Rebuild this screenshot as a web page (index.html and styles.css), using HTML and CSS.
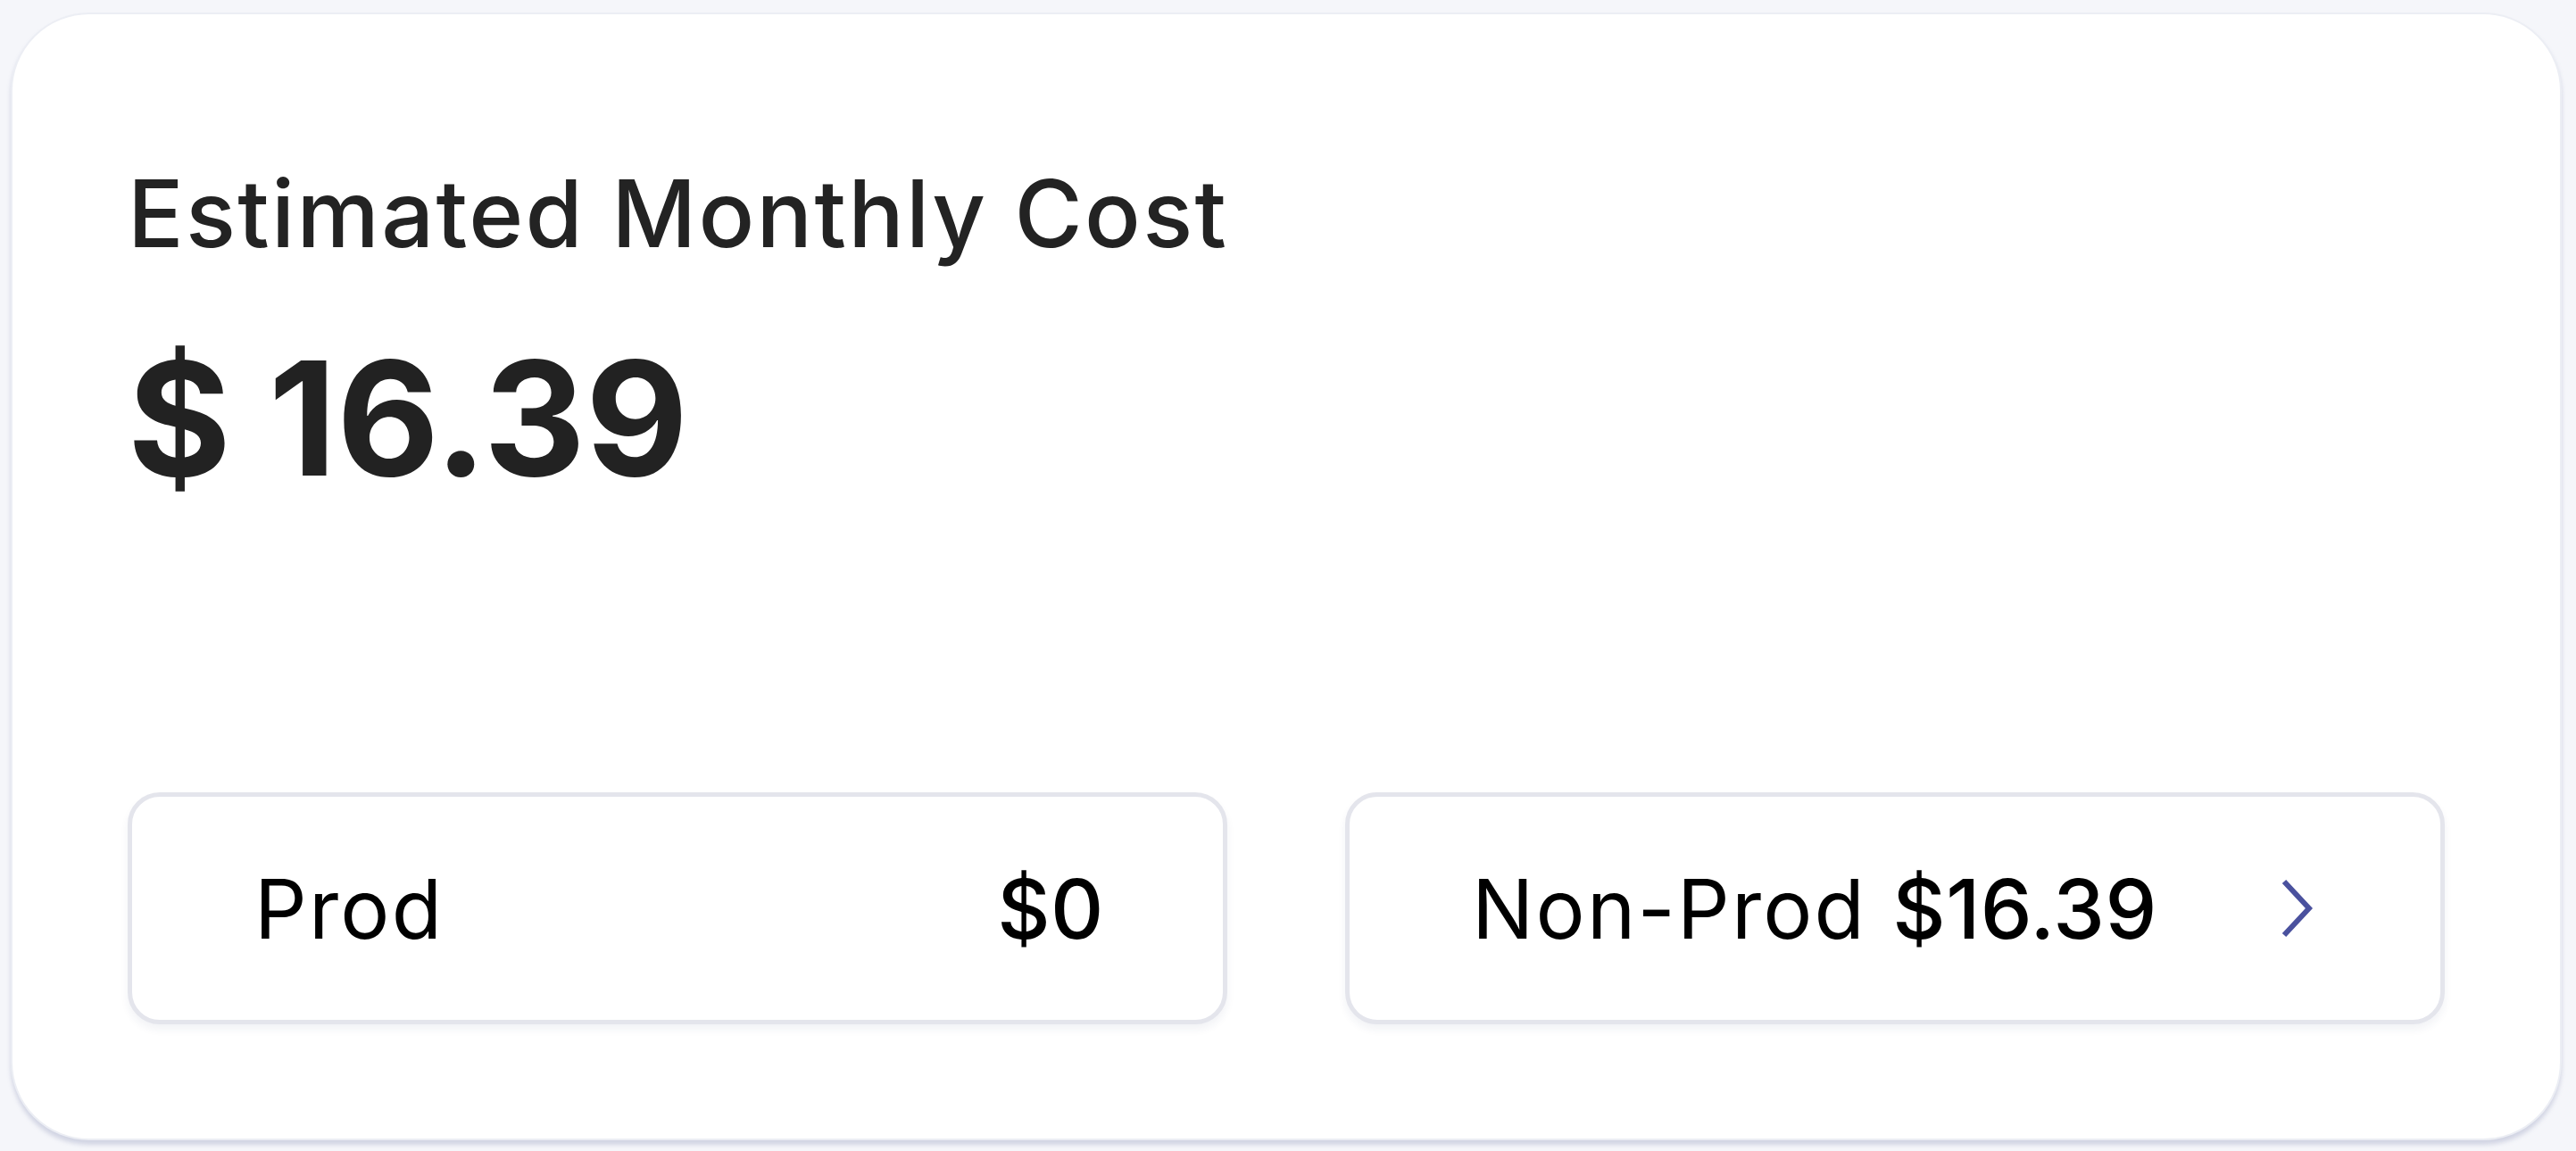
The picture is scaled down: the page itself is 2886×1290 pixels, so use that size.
FILE: index.html
```html
<!DOCTYPE html>
<html lang="en">
<head>
<meta charset="utf-8">
<title>Estimated Monthly Cost</title>
<link rel="stylesheet" href="styles.css">
</head>
<body>
  <section class="card">
    <h2 class="card-title">Estimated Monthly Cost</h2>
    <div class="total">$ 16.39</div>
    <div class="env-row">
      <div class="env-box">
        <span class="env-label">Prod</span>
        <span class="env-value">$0</span>
      </div>
      <div class="env-box">
        <span class="env-label">Non-Prod</span>
        <span class="env-value">$16.39</span>
        <svg class="chevron" viewBox="0 0 36 66" width="36" height="66" aria-hidden="true">
          <path d="M4 3 L32 33 L4 63" fill="none" stroke="#4a519e" stroke-width="6" stroke-linecap="butt" stroke-linejoin="miter"/>
        </svg>
      </div>
    </div>
  </section>
</body>
</html>
```
FILE: styles.css
```css
html, body {
  margin: 0;
  height: 100%;
}
body {
  box-sizing: border-box;
  background: #f5f6fa;
  padding: 14px 16px 12px 12px;
  display: flex;
  font-family: Inter, "Noto Sans", sans-serif;
}
.card {
  flex: 1;
  display: flex;
  flex-direction: column;
  background: #ffffff;
  border: 2px solid #eceef4;
  border-radius: 88px;
  box-shadow: 0 5px 5px rgba(120, 126, 170, 0.28);
  padding: 161px 129px 128px 129px;
}
.card-title {
  margin: 0;
  font-size: 104px;
  line-height: 125px;
  font-weight: 500;
  color: #232323;
  letter-spacing: 2.3px;
}
.total {
  margin-top: 61px;
  font-size: 177px;
  line-height: 212px;
  font-weight: 700;
  color: #222222;
}
.env-row {
  margin-top: auto;
  display: grid;
  grid-template-columns: 1fr 1fr;
  column-gap: 132px;
}
.env-box {
  box-sizing: border-box;
  height: 260px;
  display: flex;
  align-items: center;
  gap: 12px;
  padding: 0 133px 0 137px;
  border: 5px solid #e4e5ec;
  border-radius: 36px;
  background: #ffffff;
  box-shadow: 0 6px 10px rgba(40, 45, 100, 0.06);
  color: #000000;
  font-size: 92px;
  white-space: nowrap;
}
.env-label {
  flex: 1;
  font-weight: 400;
  letter-spacing: 2.2px;
}
.env-value {
  font-weight: 500;
  letter-spacing: 0.5px;
}
.chevron {
  flex: none;
  margin-left: 126px;
  margin-right: 10px;
}
```
